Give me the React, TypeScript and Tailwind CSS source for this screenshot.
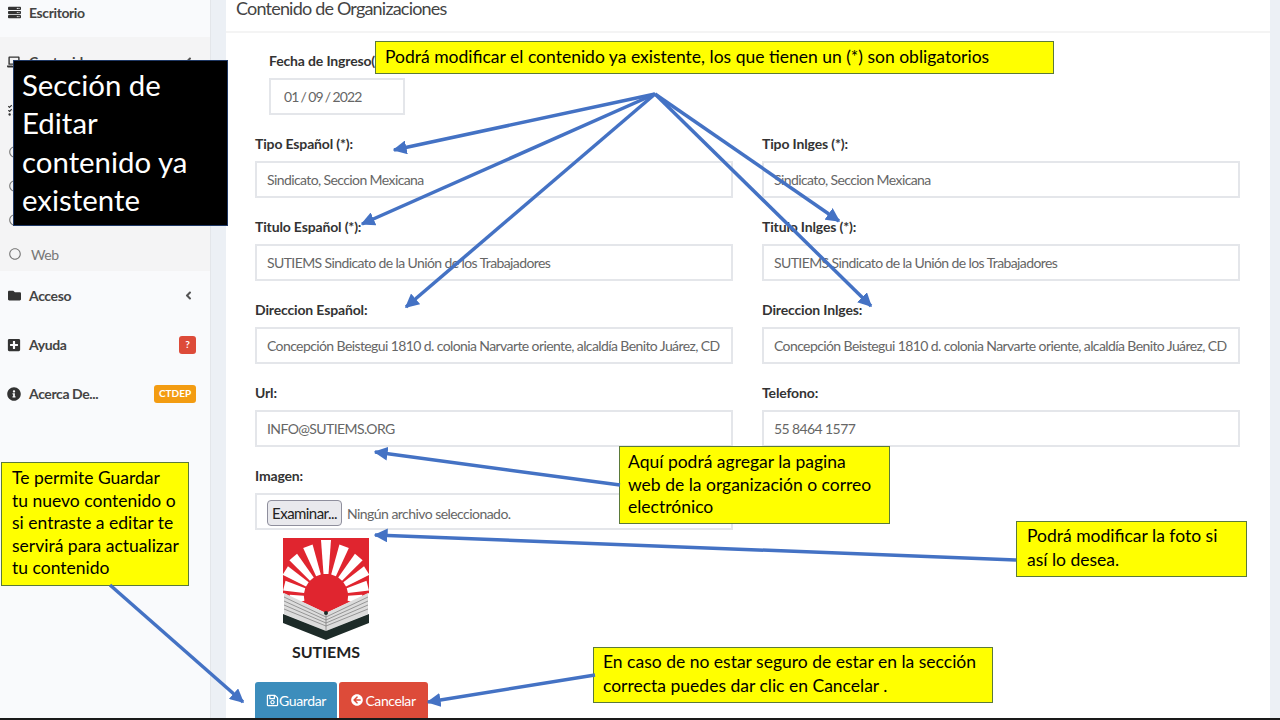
import React from "react";
import { FaAngleLeft, FaArrowCircleLeft, FaFolder, FaInfoCircle, FaLaptop, FaPlusSquare, FaRegCircle, FaRegSave, FaServer, FaTasks } from "react-icons/fa";

const sans = "font-['Lato','Noto_Sans',sans-serif]";
const note = "absolute bg-[#ffff00] border border-[#5b7a3a] text-[17.5px] text-black whitespace-nowrap";

function Field({ label, value }: { label: string; value: string }) {
  return (
    <div className="flex flex-col">
      <label className="h-[17px] text-[14px] leading-[15px] font-bold text-[#333] tracking-[-0.15px]">{label}</label>
      <div className="mt-[8px] h-[37px] flex items-center pl-[10px] border-2 border-[#e4e6ea] text-[14px] text-[#666] tracking-[-0.6px] whitespace-nowrap">
        {value}
      </div>
    </div>
  );
}

function NavRow({ icon, label, right, className = "h-[49px]" }: { icon: React.ReactNode; label: string; right?: React.ReactNode; className?: string }) {
  return (
    <div className={`flex items-center pl-[7px] pr-[14px] ${className}`}>
      <span className="w-[14px] flex justify-center text-[#333]">{icon}</span>
      <span className="ml-[8px] flex-1 text-[14px] font-bold text-[#444] tracking-[-0.4px]">{label}</span>
      {right}
    </div>
  );
}

function Logo() {
  // rayos del sol: angulo y largo
  const rays: [number, number][] = [[0, 56], [-20, 53], [20, 53], [-40, 51], [40, 51], [-58, 48], [58, 48], [-76, 43], [76, 43], [-96, 36], [96, 36]];
  return (
    <svg width="86" height="102" viewBox="0 0 86 102" className="block">
      <path d="M0 0H86V55L43 75L0 55Z" fill="#e0252f" />
      {rays.map(([a, r]) => (
        <polygon key={a} points={`40.5,${58 - 22} 45.5,${58 - 22} 48,${58 - r} 38,${58 - r}`} fill="#fff" transform={`rotate(${a} 43 58)`} />
      ))}
      <path d="M1 55L43 75L85 55V76L43 93L1 76Z" fill="#dcdcdc" />
      <path d="M1 59L43 79L85 59M1 63L43 82L85 63M1 67L43 85L85 67M1 71L43 88L85 71M43 75V93" stroke="#777" strokeWidth="0.7" fill="none" />
      <circle cx="43" cy="75" r="2" fill="#1d2b28" />
      <path d="M0 76L43 93L86 76V85L43 102L0 85Z" fill="#1d2b28" />
    </svg>
  );
}

const arrows: [number, number, number, number][] = [
  [655, 94, 394, 150],
  [655, 94, 362, 224],
  [655, 94, 406, 307],
  [655, 94, 839, 221],
  [655, 94, 871, 306],
  [620, 485, 375, 452],
  [1016, 560, 375, 535],
  [110, 585, 243, 702],
  [595, 675, 428, 702],
];

export default function App() {
  return (
    <div className={`relative w-[1280px] h-[720px] overflow-hidden bg-[#ecf0f5] flex ${sans}`}>
      <aside className="w-[211px] h-full bg-[#f9fafc] border-r border-[#e3e6ea] shrink-0 flex flex-col">
        <NavRow icon={<FaServer size={13} />} label="Escritorio" className="h-[37px] pb-[13px]" />
        <div className="bg-[#f4f4f5] h-[234px] flex flex-col">
          <NavRow icon={<FaLaptop size={14} />} label="Contenido" right={<FaAngleLeft size={13} className="text-[#555] mr-[1px]" />} />
          <NavRow icon={<FaTasks size={13} />} label="" />
          <div className="flex flex-col pl-[9px] text-[#777]">
            {["", "", "", "Web"].map((t, i) => (
              <div key={i} className="h-[34px] flex items-center gap-[10px] text-[14px] tracking-[-0.4px]">
                <FaRegCircle size={12} className="text-[#777]" />
                {t}
              </div>
            ))}
          </div>
        </div>
        <NavRow icon={<FaFolder size={13} />} label="Acceso" right={<FaAngleLeft size={13} className="text-[#555] mr-[1px]" />} />
        <NavRow icon={<FaPlusSquare size={14} />} label="Ayuda" right={<span className="w-[17px] h-[18px] rounded-[3px] bg-[#dd4b39] text-white text-[10px] font-bold flex items-center justify-center">?</span>} />
        <NavRow icon={<FaInfoCircle size={14} />} label="Acerca De..." right={<span className="w-[42px] h-[18px] rounded-[3px] bg-[#f39c12] text-white text-[10px] font-bold flex items-center justify-center">CTDEP</span>} />
      </aside>
      <div className="w-[15px] shrink-0" />
      <main className="w-[1044px] shrink-0 bg-white flex flex-col">
        <div className="h-[33px] border-b-2 border-[#f4f4f4] pl-[10px] text-[18px] leading-[17px] text-[#444] tracking-[-0.8px]">
          Contenido de Organizaciones
        </div>
        <div className="pl-[29px] pr-[30px] flex flex-col">
          <div className="pl-[14px] pt-[20px]">
            <label className="block h-[17px] text-[14px] leading-[15px] font-bold text-[#333] tracking-[-0.15px]">Fecha de Ingreso(*):</label>
            <div className="mt-[8px] w-[136px] h-[37px] flex items-center pl-[13px] border-2 border-[#e4e6ea] text-[14px] text-[#666] tracking-[-0.9px] [word-spacing:-0.5px]">01 / 09 / 2022</div>
          </div>
          <div className="mt-[21px] grid grid-cols-2 gap-x-[29px] gap-y-[21px]">
            <Field label="Tipo Español (*):" value="Sindicato, Seccion Mexicana" />
            <Field label="Tipo Inlges (*):" value="Sindicato, Seccion Mexicana" />
            <Field label="Titulo Español (*):" value="SUTIEMS Sindicato de la Unión de los Trabajadores" />
            <Field label="Titulo Inlges (*):" value="SUTIEMS Sindicato de la Unión de los Trabajadores" />
            <Field label="Direccion Español:" value="Concepción Beistegui 1810 d. colonia Narvarte oriente, alcaldía Benito Juárez, CD" />
            <Field label="Direccion Inlges:" value="Concepción Beistegui 1810 d. colonia Narvarte oriente, alcaldía Benito Juárez, CD" />
            <Field label="Url:" value="INFO@SUTIEMS.ORG" />
            <Field label="Telefono:" value="55 8464 1577" />
            <div className="flex flex-col">
              <label className="h-[17px] text-[14px] leading-[15px] font-bold text-[#333] tracking-[-0.15px]">Imagen:</label>
              <div className="mt-[8px] h-[37px] flex items-center pl-[10px] pt-[3px] border-2 border-[#e4e6ea] text-[14px] text-[#666] tracking-[-0.55px]">
                <span className="h-[26px] w-[75px] flex items-center justify-center rounded-[4px] border border-[#8f8f9d] bg-[#e9e9ed] text-[15px] text-[#222] mr-[5px]">Examinar...</span>
                Ningún archivo seleccionado.
              </div>
            </div>
          </div>
          <div className="ml-[28px] mt-[8px] flex flex-col items-center w-[86px]">
            <Logo />
            <span className="mt-[3px] text-[16px] leading-[18px] font-bold text-[#222]">SUTIEMS</span>
          </div>
          <div className="mt-[21px] flex gap-[2px]">
            <button className="w-[82px] h-[36px] rounded-t-[3px] bg-[#3c8dbc] text-white text-[14px] tracking-[-0.4px] flex items-center justify-center">
              <FaRegSave size={13} />Guardar
            </button>
            <button className="w-[89px] h-[36px] rounded-t-[3px] bg-[#dd4b39] text-white text-[14px] tracking-[-0.4px] flex items-center justify-center gap-[2px]">
              <FaArrowCircleLeft size={12} />Cancelar
            </button>
          </div>
        </div>
      </main>

      <div className="absolute left-[13px] top-[60px] w-[215px] h-[166px] bg-black border border-[#1f3864] pl-[8px] pt-[5px] text-white text-[29.4px] leading-[38.3px] whitespace-nowrap">
        Sección de<br />Editar<br />contenido ya<br />existente
      </div>
      <div className={`${note} left-[375px] top-[41px] w-[679px] h-[33px] pl-[9px] leading-[29px]`}>
        Podrá modificar el contenido ya existente, los que tienen un (*) son obligatorios
      </div>
      <div className={`${note} left-[619px] top-[446px] w-[271px] h-[78px] pl-[8px] pt-[4px] leading-[22.5px]`}>
        Aquí podrá agregar la pagina<br />web de la organización o correo<br />electrónico
      </div>
      <div className={`${note} left-[1016px] top-[521px] w-[231px] h-[56px] pl-[10px] pt-[2px] leading-[24px]`}>
        Podrá modificar la foto si<br />así lo desea.
      </div>
      <div className={`${note} left-[593px] top-[647px] w-[400px] h-[56px] pl-[9px] pt-[2px] leading-[24px]`}>
        En caso de no estar seguro de estar en la sección<br />correcta puedes dar clic en Cancelar .
      </div>
      <div className={`${note} left-[1px] top-[462px] w-[188px] h-[124px] pl-[10px] pt-[4px] leading-[22.5px]`}>
        Te permite Guardar<br />tu nuevo contenido o<br />si entraste a editar te<br />servirá para actualizar<br />tu contenido
      </div>

      <svg className="absolute inset-0 pointer-events-none" width="1280" height="720">
        <defs>
          <marker id="head" markerWidth="4" markerHeight="4" refX="3.6" refY="2" orient="auto" markerUnits="strokeWidth">
            <path d="M0 0L4 2L0 4Z" fill="#4472c4" />
          </marker>
        </defs>
        {arrows.map(([x1, y1, x2, y2], i) => (
          <line key={i} x1={x1} y1={y1} x2={x2} y2={y2} stroke="#4472c4" strokeWidth="3.5" markerEnd="url(#head)" />
        ))}
      </svg>
      <div className="absolute left-0 right-0 bottom-0 h-[2px] bg-[#1a1a1a]" />
    </div>
  );
}
